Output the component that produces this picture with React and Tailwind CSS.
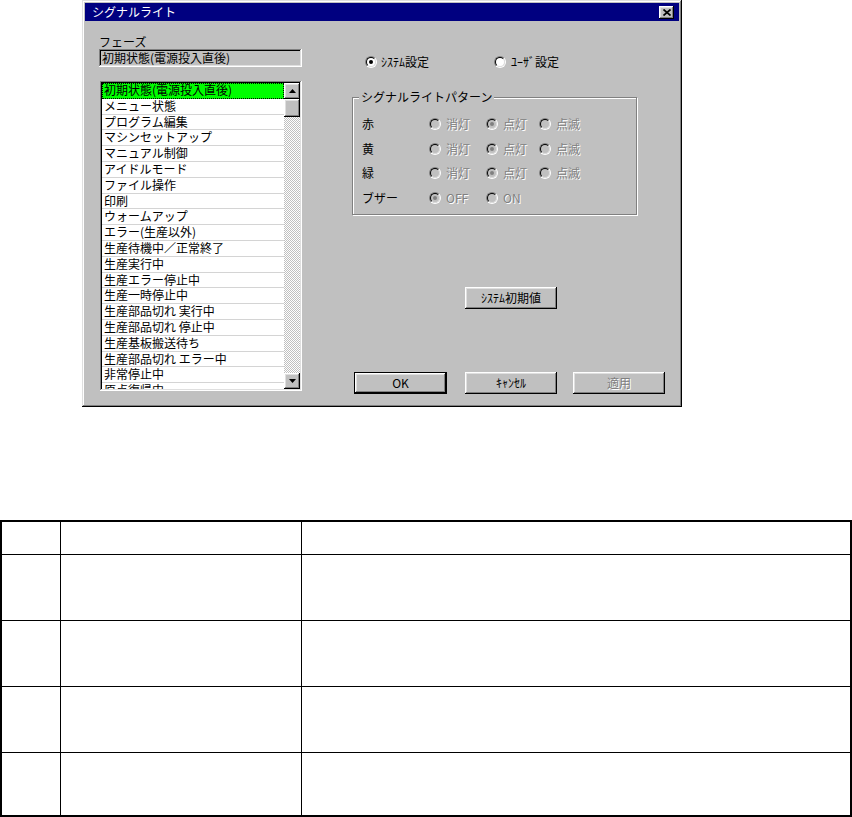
import React from 'react';

const items = [
  '初期状態(電源投入直後)',
  'メニュー状態',
  'プログラム編集',
  'マシンセットアップ',
  'マニュアル制御',
  'アイドルモード',
  'ファイル操作',
  '印刷',
  'ウォームアップ',
  'エラー(生産以外)',
  '生産待機中／正常終了',
  '生産実行中',
  '生産エラー停止中',
  '生産一時停止中',
  '生産部品切れ 実行中',
  '生産部品切れ 停止中',
  '生産基板搬送待ち',
  '生産部品切れ エラー中',
  '非常停止中',
  '原点復帰中',
];

const raised = 'bg-[#c0c0c0] shadow-[inset_-1px_-1px_#000,inset_1px_1px_#fff,inset_-2px_-2px_#808080,inset_2px_2px_#dfdfdf]';
const sunken = 'shadow-[inset_-1px_-1px_#fff,inset_1px_1px_#808080,inset_-2px_-2px_#dfdfdf,inset_2px_2px_#000]';
const dimText = 'text-[#808080] [text-shadow:1px_1px_0_#fff]';

const Radio = ({ checked, disabled }) => (
  <span className="inline-flex w-[12px] h-[12px] shrink-0 rounded-full border border-t-[#808080] border-l-[#808080] border-r-white border-b-white">
    <span className={disabled
      ? 'flex flex-1 items-center justify-center rounded-full border border-t-black border-l-black border-r-[#dfdfdf] border-b-[#dfdfdf] bg-[#c0c0c0]'
      : 'flex flex-1 items-center justify-center rounded-full border border-t-black border-l-black border-r-[#dfdfdf] border-b-[#dfdfdf] bg-white'}>
      {checked && <span className={disabled ? 'w-[4px] h-[4px] rounded-full bg-[#808080]' : 'w-[4px] h-[4px] rounded-full bg-black'} />}
    </span>
  </span>
);

const Option = ({ label, checked, width }) => (
  <div className={`flex items-center gap-[5px] ${width}`}>
    <Radio checked={checked} disabled />
    <span className={dimText}>{label}</span>
  </div>
);

const Arrow = ({ down }) => (
  <svg width="7" height="4" viewBox="0 0 7 4">
    <polygon points={down ? '0,0 7,0 3.5,4' : '3.5,0 7,4 0,4'} fill="#000" />
  </svg>
);

const lights = ['赤', '黄', '緑'];

export default function App() {
  return (
    <div className="w-[852px] h-[817px] bg-white flex flex-col font-['Noto_Sans_CJK_JP',sans-serif] text-[12px] leading-[14px] text-black">
      {/* dialog */}
      <div className="ml-[82px] w-[600px] h-[407px] p-[3px] flex flex-col bg-[#c0c0c0] shadow-[inset_-1px_-1px_#000,inset_1px_1px_#dfdfdf,inset_-2px_-2px_#808080,inset_2px_2px_#fff]">
        <div className="h-[18px] bg-[#000080] flex items-center justify-between pl-[7px] pr-[5px]">
          <span className="text-white">シグナルライト</span>
          <button className={`w-[15px] h-[13px] flex items-center justify-center ${raised}`}>
            <svg width="8" height="7" viewBox="0 0 8 7">
              <path d="M0.5 0.5 L7.5 6.5 M7.5 0.5 L0.5 6.5" stroke="#000" strokeWidth="1.7" />
            </svg>
          </button>
        </div>

        <div className="flex flex-1">
          {/* left column */}
          <div className="ml-[14px] w-[203px] flex flex-col">
            <div className="mt-[14px] h-[14px]">フェーズ</div>
            <div className={`h-[18px] w-[203px] flex items-center pl-[3px] ${sunken}`}>初期状態(電源投入直後)</div>
            <div className={`mt-[14px] ml-[1px] w-[202px] h-[310px] p-[2px] flex bg-white ${sunken}`}>
              <div className="flex-1 overflow-hidden">
                {items.map((t, i) => (
                  <div
                    key={t}
                    className={i === 0
                      ? 'h-[15.8px] leading-[14.8px] pl-[2px] bg-[#00ff00] outline-1 outline-dotted outline-black -outline-offset-1 whitespace-nowrap'
                      : 'h-[15.8px] leading-[14.8px] pl-[2px] border-b border-[#d4d4d4] whitespace-nowrap'}
                  >
                    {t}
                  </div>
                ))}
              </div>
              <div className="w-[16px] flex flex-col">
                <div className={`h-[16px] flex items-center justify-center ${raised}`}><Arrow /></div>
                <div className={`h-[18px] ${raised}`} />
                <div className="flex-1 bg-[repeating-conic-gradient(#c0c0c0_0%_25%,#ffffff_0%_50%)] bg-[length:2px_2px]" />
                <div className={`h-[16px] flex items-center justify-center ${raised}`}><Arrow down /></div>
              </div>
            </div>
          </div>

          {/* right column */}
          <div className="ml-[50px] flex flex-col">
            <div className="mt-[33px] h-[16px] ml-[13px] flex items-center">
              <div className="w-[129px] flex items-center gap-[4px]">
                <Radio checked />
                <span>ｼｽﾃﾑ設定</span>
              </div>
              <div className="flex items-center gap-[5px]">
                <Radio />
                <span>ﾕｰｻﾞ設定</span>
              </div>
            </div>

            <fieldset className="mt-[20px] w-[285px] h-[125px] border border-[#808080] shadow-[1px_1px_0_#fff,inset_1px_1px_0_#fff]">
              <legend className="ml-[6px] px-[2px] h-[14px] bg-[#c0c0c0]">シグナルライトパターン</legend>
              <div className="pt-[12px] pl-[9px] flex flex-col gap-[8.5px]">
                {lights.map((l) => (
                  <div key={l} className="h-[16px] flex items-center">
                    <span className="w-[67px]">{l}</span>
                    <Option label="消灯" width="w-[57px]" />
                    <Option label="点灯" checked width="w-[53px]" />
                    <Option label="点滅" width="" />
                  </div>
                ))}
                <div className="h-[16px] flex items-center">
                  <span className="w-[67px]">ブザー</span>
                  <Option label="OFF" checked width="w-[57px]" />
                  <Option label="ON" width="" />
                </div>
              </div>
            </fieldset>

            <button className={`mt-[72px] ml-[113px] w-[92px] h-[22px] flex items-center justify-center ${raised}`}>ｼｽﾃﾑ初期値</button>

            <div className="mt-[63px] flex">
              <button className="ml-[2px] w-[93px] h-[22px] border border-black flex">
                <span className={`flex-1 flex items-center justify-center ${raised}`}>OK</span>
              </button>
              <button className={`ml-[18px] w-[92px] h-[22px] flex items-center justify-center ${raised}`}>ｷｬﾝｾﾙ</button>
              <button className={`ml-[16px] w-[92px] h-[22px] flex items-center justify-center ${raised}`}>
                <span className={dimText}>適用</span>
              </button>
            </div>
          </div>
        </div>
      </div>

      {/* table */}
      <div className="mt-[113px] w-[852px] h-[297px] border-2 border-black flex flex-col">
        {[33, 66, 66, 66].map((h, i) => (
          <div key={i} className={h === 33 ? 'h-[33px] flex border-b border-black' : 'h-[66px] flex border-b border-black'}>
            <div className="w-[59px] border-r border-black" />
            <div className="w-[241px] border-r border-black" />
            <div className="flex-1" />
          </div>
        ))}
        <div className="flex-1 flex">
          <div className="w-[59px] border-r border-black" />
          <div className="w-[241px] border-r border-black" />
          <div className="flex-1" />
        </div>
      </div>
    </div>
  );
}
